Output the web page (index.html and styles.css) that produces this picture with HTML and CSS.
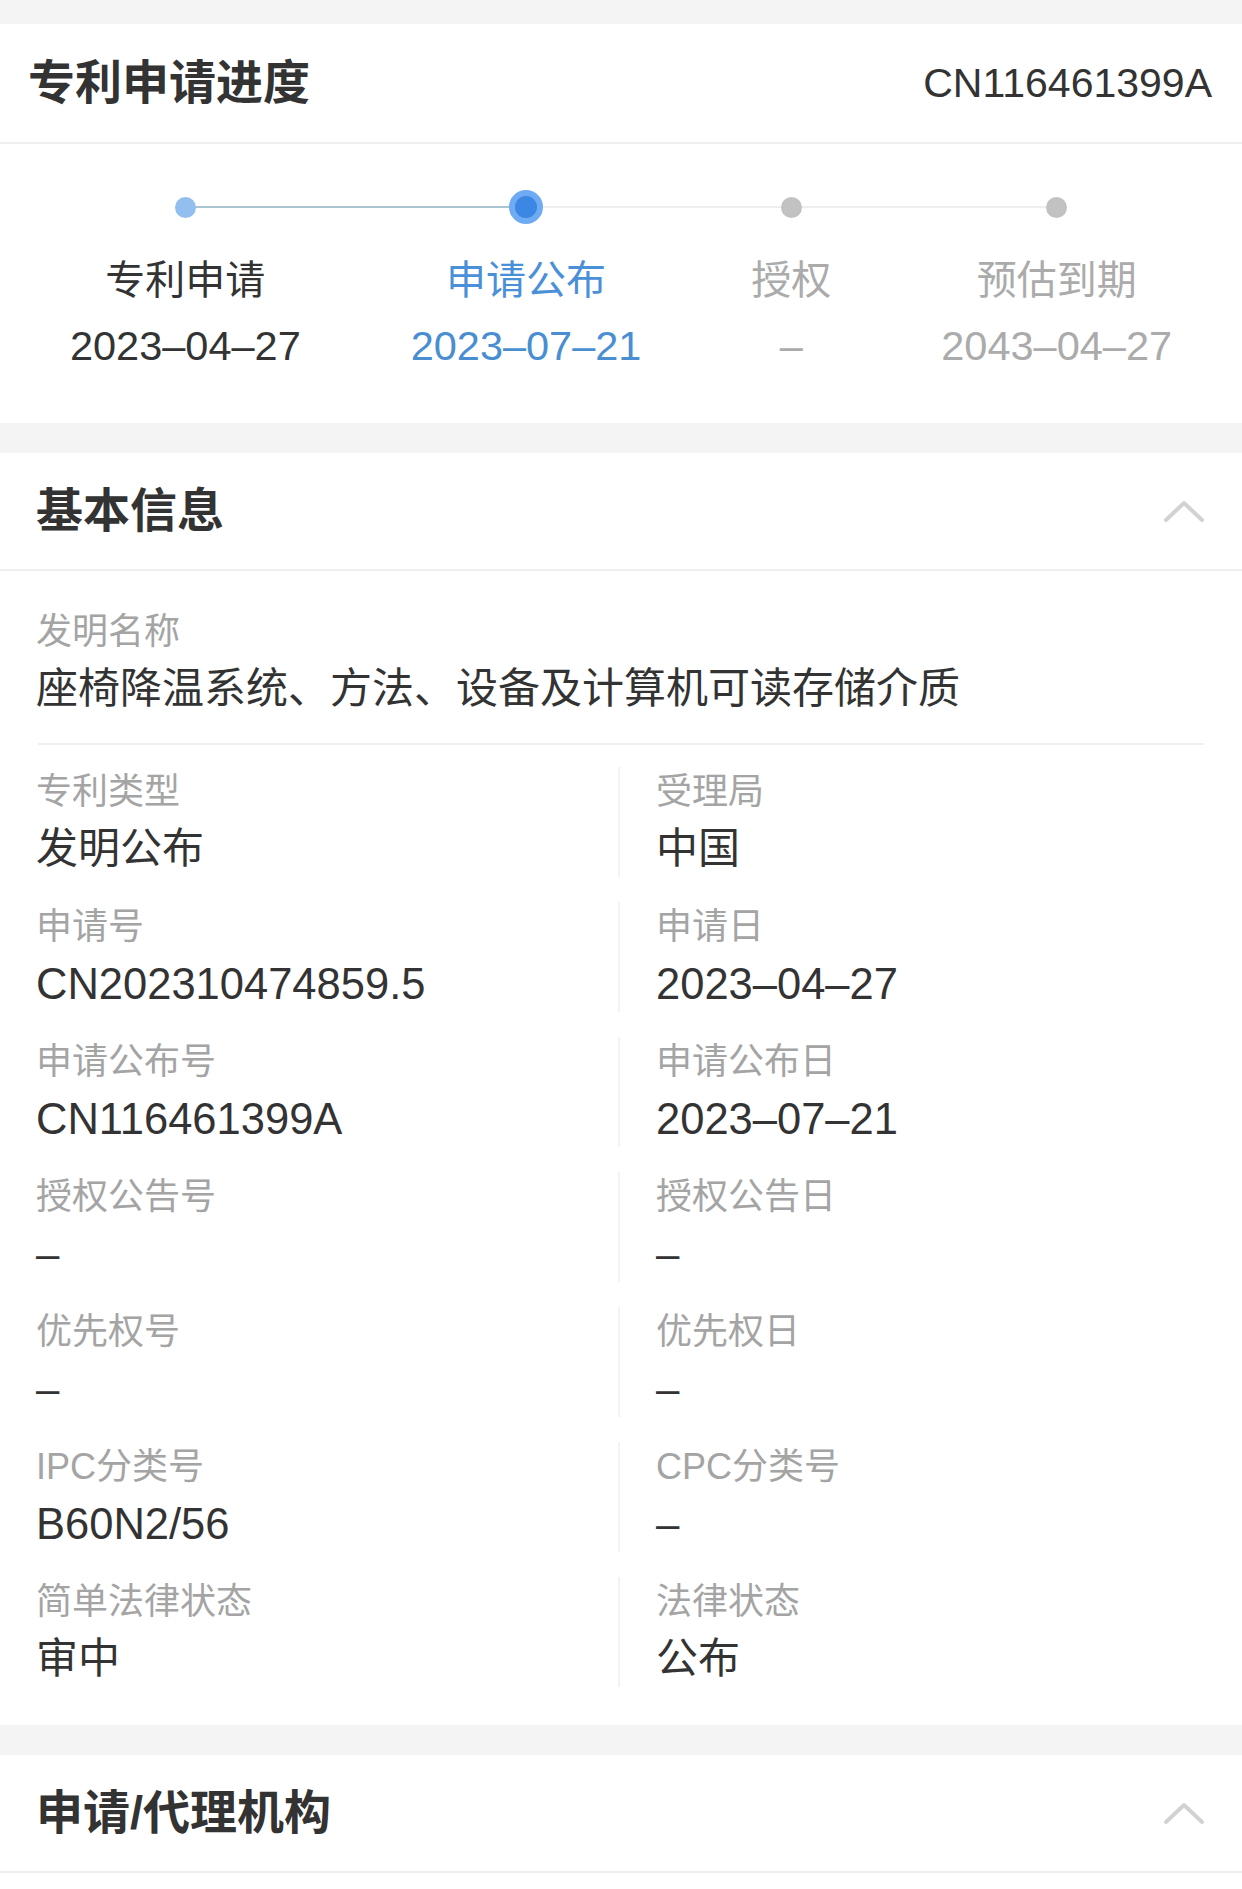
FILE: index.html
```html
<!DOCTYPE html>
<html lang="zh-CN">
<head>
<meta charset="utf-8">
<title>专利申请进度</title>
<link rel="stylesheet" href="styles.css">
</head>
<body>
<div class="page">
  <section class="card head">
    <h1 class="head-title">专利申请进度</h1>
    <span class="head-no">CN116461399A</span>
  </section>

  <section class="card steps">
    <div class="step done first">
      <div class="dot-row"><span class="dot"></span></div>
      <div class="step-label">专利申请</div>
      <div class="step-date">2023–04–27</div>
    </div>
    <div class="step active">
      <div class="dot-row"><span class="dot"></span></div>
      <div class="step-label">申请公布</div>
      <div class="step-date">2023–07–21</div>
    </div>
    <div class="step todo">
      <div class="dot-row"><span class="dot"></span></div>
      <div class="step-label">授权</div>
      <div class="step-date">–</div>
    </div>
    <div class="step todo last">
      <div class="dot-row"><span class="dot"></span></div>
      <div class="step-label">预估到期</div>
      <div class="step-date">2043–04–27</div>
    </div>
  </section>

  <section class="card gap">
    <div class="sec-head">
      <h2 class="sec-title">基本信息</h2>
      <svg class="chev" width="40" height="22" viewBox="0 0 40 22"><polyline points="2,20 20,3 38,20" fill="none" stroke="#d2d2d2" stroke-width="4" stroke-linecap="round" stroke-linejoin="round"/></svg>
    </div>
    <div class="info-body">
      <div class="title-field">
        <div class="label">发明名称</div>
        <div class="value">座椅降温系统、方法、设备及计算机可读存储介质</div>
      </div>
      <div class="grid">
        <div class="cell"><div class="label">专利类型</div><div class="value">发明公布</div></div>
        <div class="cell right"><div class="label">受理局</div><div class="value">中国</div></div>
        <div class="cell"><div class="label">申请号</div><div class="value num">CN202310474859.5</div></div>
        <div class="cell right"><div class="label">申请日</div><div class="value num">2023–04–27</div></div>
        <div class="cell"><div class="label">申请公布号</div><div class="value num">CN116461399A</div></div>
        <div class="cell right"><div class="label">申请公布日</div><div class="value num">2023–07–21</div></div>
        <div class="cell"><div class="label">授权公告号</div><div class="value">–</div></div>
        <div class="cell right"><div class="label">授权公告日</div><div class="value">–</div></div>
        <div class="cell"><div class="label">优先权号</div><div class="value">–</div></div>
        <div class="cell right"><div class="label">优先权日</div><div class="value">–</div></div>
        <div class="cell"><div class="label">IPC分类号</div><div class="value num">B60N2/56</div></div>
        <div class="cell right"><div class="label">CPC分类号</div><div class="value">–</div></div>
        <div class="cell"><div class="label">简单法律状态</div><div class="value">审中</div></div>
        <div class="cell right"><div class="label">法律状态</div><div class="value">公布</div></div>
      </div>
    </div>
  </section>

  <section class="card gap">
    <div class="sec-head">
      <h2 class="sec-title">申请/代理机构</h2>
      <svg class="chev" width="40" height="22" viewBox="0 0 40 22"><polyline points="2,20 20,3 38,20" fill="none" stroke="#d2d2d2" stroke-width="4" stroke-linecap="round" stroke-linejoin="round"/></svg>
    </div>
    <div class="sec-rest"></div>
  </section>
</div>
</body>
</html>
```
FILE: styles.css
```css
* { box-sizing: border-box; }
html, body { margin: 0; padding: 0; }
body {
  background: #f4f4f4;
  font-family: "Liberation Sans", "Noto Sans CJK SC", sans-serif;
  color: #333;
}
.page { padding-top: 24px; }
.card { background: #fff; }
.gap { margin-top: 30px; }

.head {
  height: 120px;
  border-bottom: 2px solid #efefef;
  display: flex;
  align-items: center;
  justify-content: space-between;
  padding: 0 30px 0 28px;
}
.head-title {
  margin: 0;
  font-size: 47px;
  font-weight: 700;
  color: #333;
  line-height: 60px;
}
.head-no {
  font-size: 41px;
  color: #333;
  line-height: 60px;
}

.steps {
  display: flex;
  padding: 46px 15px 52px;
}
.step {
  flex: 1 1 auto;
  display: flex;
  flex-direction: column;
  align-items: center;
  position: relative;
}
.step::before, .step::after {
  content: "";
  position: absolute;
  top: 16px;
  height: 2px;
  background: #eeeeee;
}
.step::before { left: 0; right: 50%; }
.step::after { left: 50%; right: 0; }
.step.first::before, .step.last::after { display: none; }
.step.done::after, .step.active::before { background: #a9c5d1; }

.dot-row {
  height: 34px;
  display: flex;
  align-items: center;
  justify-content: center;
  position: relative;
  z-index: 1;
}
.dot {
  width: 21px;
  height: 21px;
  border-radius: 50%;
  background: #c2c2c2;
}
.done .dot { background: #93bef0; }
.active .dot {
  width: 34px;
  height: 34px;
  background: #3c86e4;
  border: 6px solid #6eabf3;
}
.step-label {
  margin-top: 31px;
  font-size: 40px;
  line-height: 50px;
  white-space: nowrap;
}
.step-date {
  margin-top: 16px;
  font-size: 41.5px;
  line-height: 50px;
  white-space: nowrap;
}
.done .step-label, .done .step-date { color: #333; }
.active .step-label { color: #4a90d9; }
.active .step-date { color: #4a8ed2; }
.todo .step-label, .todo .step-date { color: #ababab; }

.sec-head {
  height: 118px;
  border-bottom: 2px solid #efefef;
  display: flex;
  align-items: center;
  justify-content: space-between;
  padding: 0 38px 0 36px;
}
.sec-title {
  margin: 0;
  font-size: 47px;
  font-weight: 700;
  color: #333;
  line-height: 60px;
}
.chev { display: block; }
.sec-rest { height: 40px; }

.info-body { padding: 0 38px 38px 36px; }
.title-field {
  padding: 36px 0 26px;
  border-bottom: 2px solid #f0f0f0;
  margin-left: 2px;
}
.label {
  font-size: 36px;
  line-height: 50px;
  color: #a4a4a4;
  white-space: nowrap;
}
.title-field .label, .title-field .value { margin-left: -2px; }
.value {
  margin-top: 4px;
  font-size: 42px;
  line-height: 56px;
  color: #333;
  white-space: nowrap;
}
.value.num {
  font-size: 43.5px;
}
.grid {
  display: grid;
  grid-template-columns: 582px 1fr;
  row-gap: 25px;
  padding-top: 22px;
}
.cell.right {
  border-left: 2px solid #f3f3f3;
  padding-left: 36px;
}
```
